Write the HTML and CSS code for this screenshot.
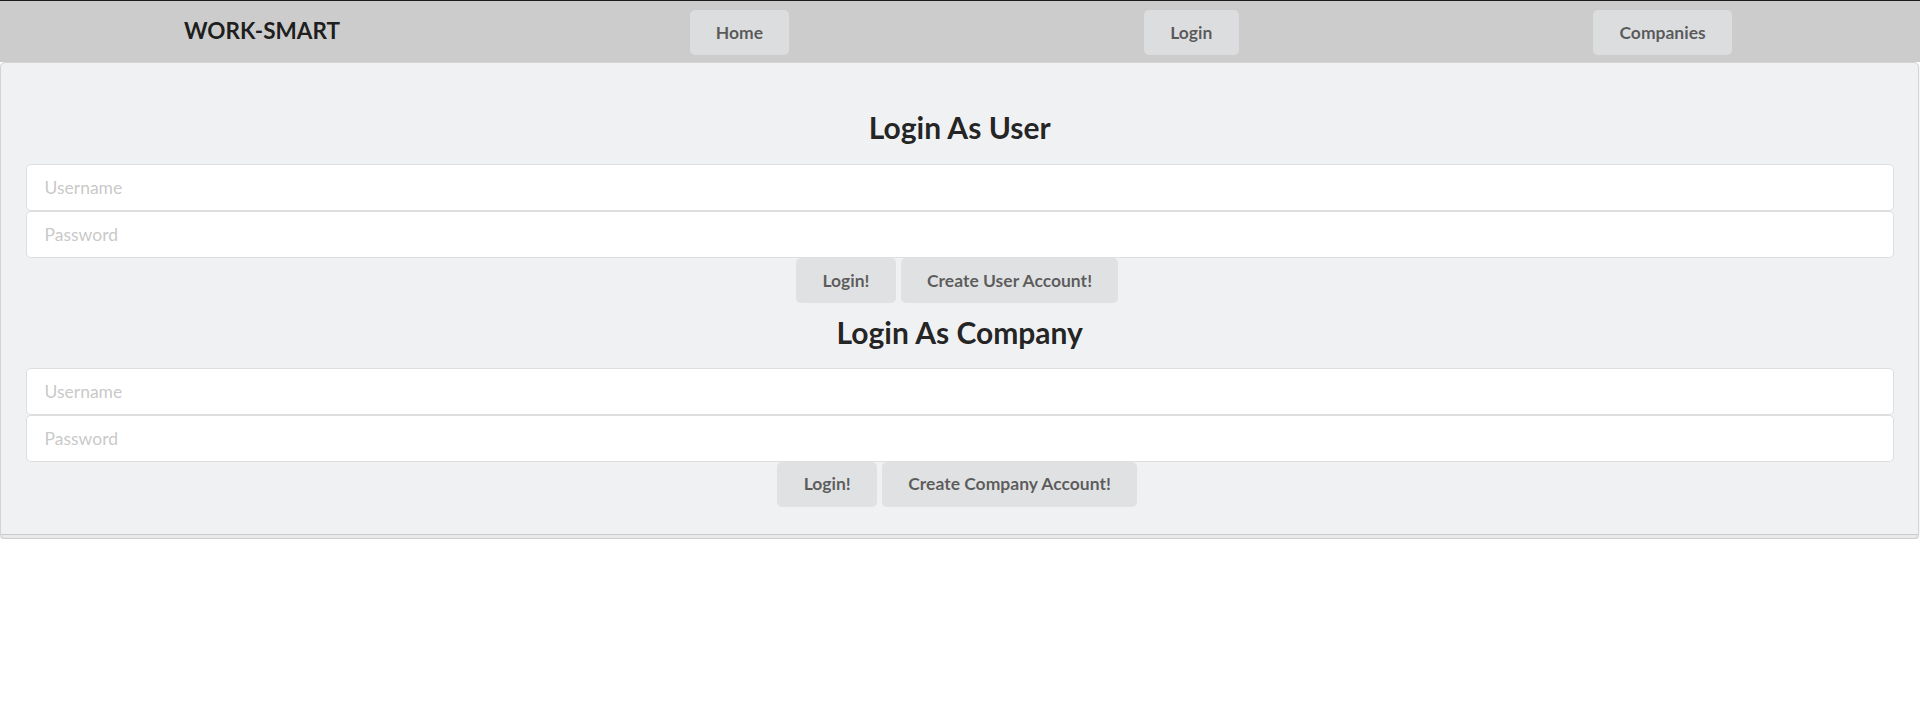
FILE: index.html
```html
<!DOCTYPE html>
<html lang="en">
<head>
<meta charset="utf-8">
<title>Work-Smart</title>
<link rel="stylesheet" href="styles.css">
</head>
<body>
<header class="topbar">
  <h3 class="brand">WORK-SMART</h3>
  <button class="btn" type="button">Home</button>
  <button class="btn" type="button">Login</button>
  <button class="btn" type="button">Companies</button>
</header>
<main class="segment">
  <h2 class="title title-user">Login As User</h2>
  <form class="form">
    <input class="field" type="text" placeholder="Username">
    <input class="field" type="password" placeholder="Password">
    <div class="actions">
      <button class="btn" type="button">Login!</button>
      <button class="btn" type="button">Create User Account!</button>
    </div>
  </form>
  <h2 class="title title-company">Login As Company</h2>
  <form class="form">
    <input class="field" type="text" placeholder="Username">
    <input class="field" type="password" placeholder="Password">
    <div class="actions">
      <button class="btn" type="button">Login!</button>
      <button class="btn" type="button">Create Company Account!</button>
    </div>
  </form>
</main>
</body>
</html>
```

FILE: styles.css
```css
* { box-sizing: border-box; }

html, body {
  margin: 0;
  padding: 0;
  background: #ffffff;
  font-family: Lato, "Helvetica Neue", Arial, sans-serif;
  font-size: 17.5px;
  color: rgba(0, 0, 0, 0.87);
}

.topbar {
  display: flex;
  align-items: center;
  justify-content: space-between;
  height: 62px;
  border-top: 1px solid #1b1c1d;
  background: #cccccc;
  padding: 0 188px 0 184px;
}

.brand {
  margin: 0 -5px 0 0;
  font-size: 22.5px;
  font-weight: 700;
  line-height: 1;
  color: rgba(0, 0, 0, 0.87);
  white-space: nowrap;
}

.btn {
  font-family: Lato, "Helvetica Neue", Arial, sans-serif;
  font-size: 17.5px;
  font-weight: 700;
  line-height: 1;
  height: 44.5px;
  padding: 0 26.25px;
  border: none;
  border-radius: 5px;
  background: #e0e1e2;
  color: rgba(0, 0, 0, 0.6);
  white-space: nowrap;
  cursor: pointer;
}

.topbar .btn {
  background: #dcdddf;
  margin-top: 2px;
}

.segment {
  position: relative;
  margin: 0 1px 0 0;
  padding: 45px 24.5px 31px 25px;
  background: #f0f1f3;
  border: 1px solid #d4d4d5;
  border-radius: 5px;
  box-shadow: 0 1px 2px 0 rgba(34, 36, 38, 0.15);
}

.segment::after {
  content: "";
  position: absolute;
  left: 0;
  bottom: -4px;
  width: 100%;
  height: 6px;
  border-top: 1px solid rgba(34, 36, 38, 0.15);
  border-bottom: 1px solid rgba(34, 36, 38, 0.08);
  background: rgba(0, 0, 0, 0.03);
  border-radius: 0 0 5px 5px;
}

.title {
  margin: 0 0 17.5px;
  text-align: center;
  font-size: 30px;
  font-weight: 700;
  line-height: 38.57px;
  color: rgba(0, 0, 0, 0.87);
}

.title-company {
  margin-top: 9.5px;
  margin-bottom: 16.5px;
}

.form {
  display: flex;
  flex-direction: column;
}

.field {
  display: block;
  width: 100%;
  height: 47px;
  padding: 0 17.5px;
  font-family: Lato, "Helvetica Neue", Arial, sans-serif;
  font-size: 17.5px;
  color: rgba(0, 0, 0, 0.87);
  background: #ffffff;
  border: 1px solid rgba(34, 36, 38, 0.15);
  border-radius: 5px;
  outline: none;
}

.field::placeholder {
  color: rgba(191, 191, 191, 0.87);
}

.actions {
  display: flex;
  justify-content: center;
}

.actions .btn {
  height: 45px;
  margin-right: 5px;
}
```
